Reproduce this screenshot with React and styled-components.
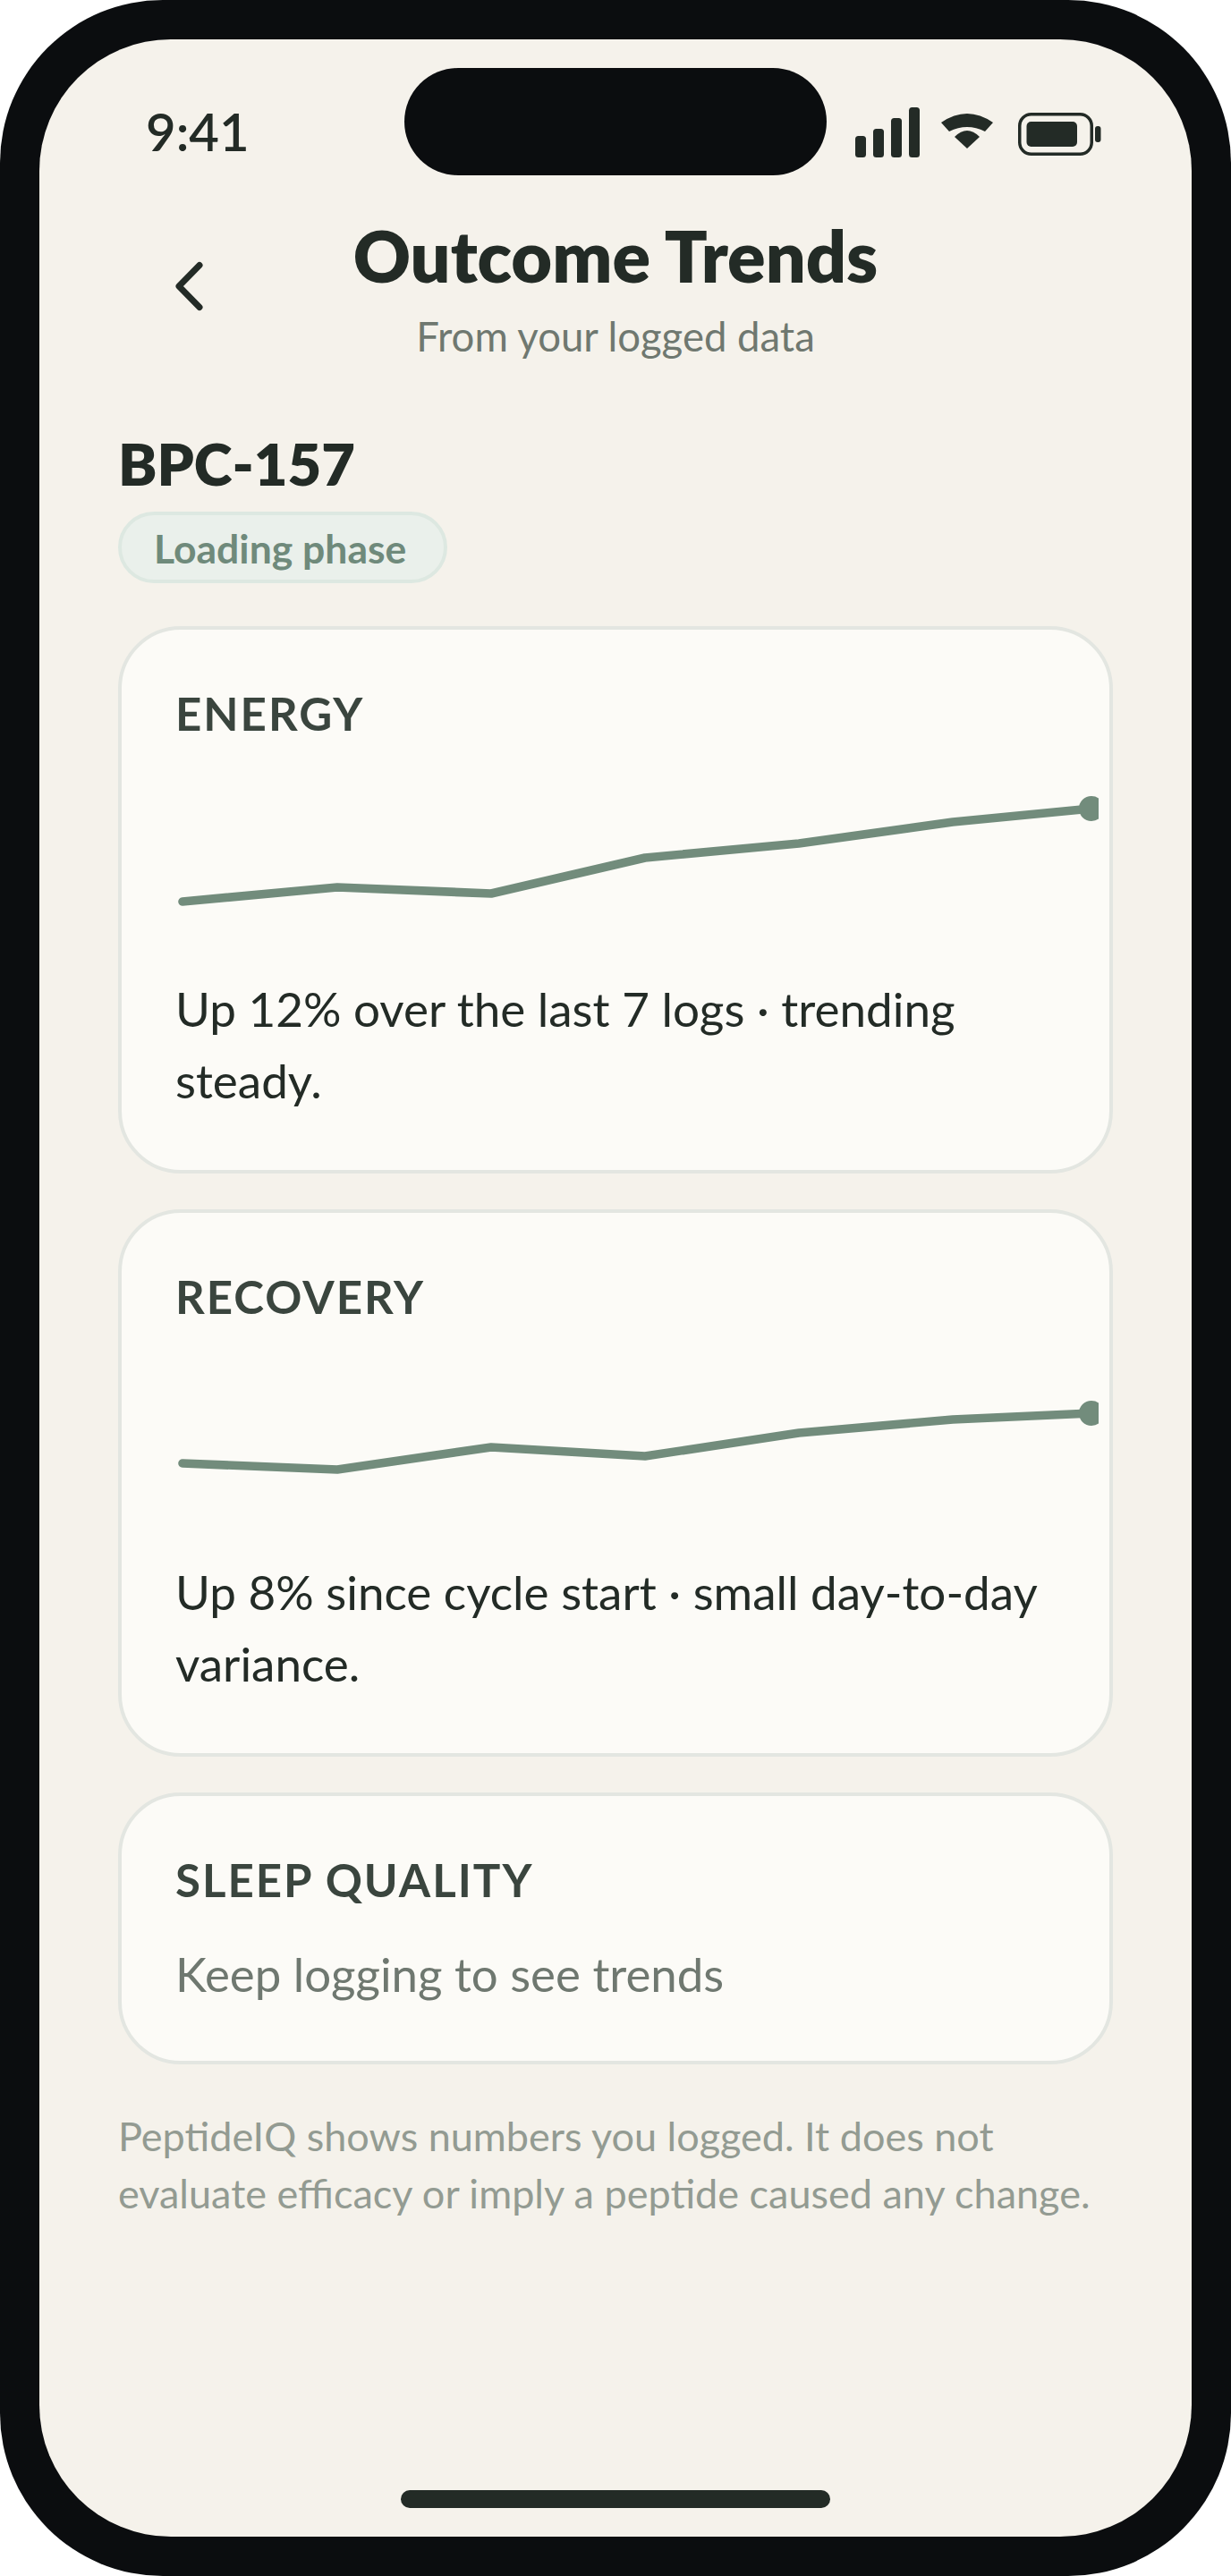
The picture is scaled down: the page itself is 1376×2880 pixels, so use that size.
import React from 'react'
import styled, { createGlobalStyle } from 'styled-components'

const GlobalStyle = createGlobalStyle`
  html, body {
    margin: 0;
    padding: 0;
    background: #fff;
  }
`

const Frame = styled.div`
  width: 1376px;
  height: 2880px;
  box-sizing: border-box;
  padding: 44px;
  background: #0b0d0f;
  border-radius: 182px;
  font-family: 'Lato', 'Open Sans', sans-serif;
`

const Screen = styled.div`
  position: relative;
  height: 100%;
  box-sizing: border-box;
  padding: 0 88px;
  background: #f5f2eb;
  border-radius: 147px;
  overflow: hidden;
  display: flex;
  flex-direction: column;
`

const Notch = styled.div`
  position: absolute;
  top: 32px;
  left: 408px;
  width: 472px;
  height: 120px;
  border-radius: 60px;
  background: #0b0d0f;
`

const StatusBar = styled.div`
  height: 132px;
  display: flex;
  align-items: flex-end;
  justify-content: space-between;
  padding: 0 12px 0 31px;
  color: #232b26;
`

const Time = styled.div`
  font-size: 58px;
  line-height: 58px;
  font-weight: 600;
`

const StatusIcons = styled.svg`
  display: block;
`

const Header = styled.header`
  position: relative;
  text-align: center;
  margin-top: 62px;
`

const BackIcon = styled.svg`
  position: absolute;
  left: 62px;
  top: 54px;
`

const Title = styled.h1`
  margin: 0;
  font-size: 79px;
  line-height: 96px;
  font-weight: 800;
  color: #232b26;
`

const Subtitle = styled.p`
  margin: 14px 0 0;
  font-size: 45.5px;
  line-height: 56px;
  color: #6f7870;
`

const Compound = styled.h2`
  margin: 74px 0 0;
  font-size: 65px;
  line-height: 80px;
  font-weight: 800;
  color: #232b26;
`

const Pill = styled.div`
  align-self: flex-start;
  margin-top: 14px;
  height: 80px;
  box-sizing: border-box;
  padding: 1px 42px 0 36px;
  display: flex;
  align-items: center;
  border: 4px solid #dde8e1;
  border-radius: 40px;
  background: #eaf0eb;
  color: #6f8a7b;
  font-size: 44.5px;
  font-weight: 700;
`

const Cards = styled.div`
  margin-top: 48px;
  display: flex;
  flex-direction: column;
  gap: 40px;
`

const Card = styled.section`
  box-sizing: border-box;
  padding: 62px 60px 60px;
  background: #fcfbf7;
  border: 4px solid #e3e6e1;
  border-radius: 70px;
`

const CardLabel = styled.div`
  font-size: 51px;
  line-height: 64px;
  font-weight: 700;
  letter-spacing: 2px;
  color: #3a453e;
`

const ChartSvg = styled.svg`
  display: block;
  margin: 28px 0 60px;
`

const CardText = styled.p`
  margin: 0;
  font-size: 53px;
  line-height: 80px;
  color: #232b26;
`

const EmptyText = styled.p`
  margin: 36px 0 0;
  font-size: 52.8px;
  line-height: 74px;
  color: #6f7870;
`

const Footnote = styled.p`
  margin: 48px 0 0;
  font-size: 45px;
  line-height: 64px;
  color: #939b92;
`

const HomeIndicator = styled.div`
  position: absolute;
  left: 404px;
  bottom: 32px;
  width: 480px;
  height: 20px;
  border-radius: 10px;
  background: #232b26;
`

const Signal = () => (
  <g fill="#232b26">
    <rect x="0" y="32" width="12" height="24" rx="3.5" />
    <rect x="20" y="24" width="12" height="32" rx="3.5" />
    <rect x="40" y="12" width="12" height="44" rx="3.5" />
    <rect x="60" y="0" width="12" height="56" rx="3.5" />
  </g>
)

const Wifi = () => (
  <g fill="#232b26">
    <path d="M96 17 Q125 -3 154 17 L145 27 Q125 17 105 27 Z" />
    <path d="M111 33 Q125 19 139 33 L125 46 Z" />
  </g>
)

const Battery = () => (
  <g fill="#232b26">
    <rect x="183.75" y="7.75" width="80.5" height="44.5" rx="13" fill="none" stroke="#232b26" strokeWidth="3.5" />
    <rect x="191.5" y="16" width="56.5" height="28" rx="5" />
    <rect x="268" y="21" width="6.5" height="18" rx="3" />
  </g>
)

function Chart({ points }) {
  const line = points.map(p => p.join(',')).join(' ')
  const [endX, endY] = points[points.length - 1]

  return (
    <ChartSvg width="1032" height="170" viewBox="0 0 1032 170">
      <polyline points={line} fill="none" stroke="#728c7c" strokeWidth="9.6" strokeLinejoin="round" strokeLinecap="round" />
      <circle cx={endX} cy={endY} r="14" fill="#728c7c" />
    </ChartSvg>
  )
}

const energyPoints = [[8, 150], [181, 134], [353, 141], [525, 101], [697, 85], [869, 61], [1024, 46]]
const recoveryPoints = [[8, 126], [181, 133], [353, 108], [525, 118], [697, 92], [869, 77], [1024, 70]]

function App() {
  return (
    <>
      <GlobalStyle />
      <Frame>
        <Screen>
          <Notch />
          <StatusBar>
            <Time>9:41</Time>
            <StatusIcons width="276" height="56" viewBox="0 0 276 56">
              <Signal />
              <Wifi />
              <Battery />
            </StatusIcons>
          </StatusBar>

          <Header>
            <BackIcon width="34" height="56" viewBox="0 0 34 56" fill="none" stroke="#232b26" strokeWidth="7" strokeLinecap="round" strokeLinejoin="round">
              <path d="M29 4.5 L6 28 L29 51.5" />
            </BackIcon>
            <Title>Outcome Trends</Title>
            <Subtitle>From your logged data</Subtitle>
          </Header>

          <Compound>BPC-157</Compound>
          <Pill>Loading phase</Pill>

          <Cards>
            <Card>
              <CardLabel>ENERGY</CardLabel>
              <Chart points={energyPoints} />
              <CardText>Up 12% over the last 7 logs · trending steady.</CardText>
            </Card>
            <Card>
              <CardLabel>RECOVERY</CardLabel>
              <Chart points={recoveryPoints} />
              <CardText>Up 8% since cycle start · small day-to-day variance.</CardText>
            </Card>
            <Card>
              <CardLabel>SLEEP QUALITY</CardLabel>
              <EmptyText>Keep logging to see trends</EmptyText>
            </Card>
          </Cards>

          <Footnote>PeptideIQ shows numbers you logged. It does not evaluate efficacy or imply a peptide caused any change.</Footnote>
          <HomeIndicator />
        </Screen>
      </Frame>
    </>
  )
}

export default App
